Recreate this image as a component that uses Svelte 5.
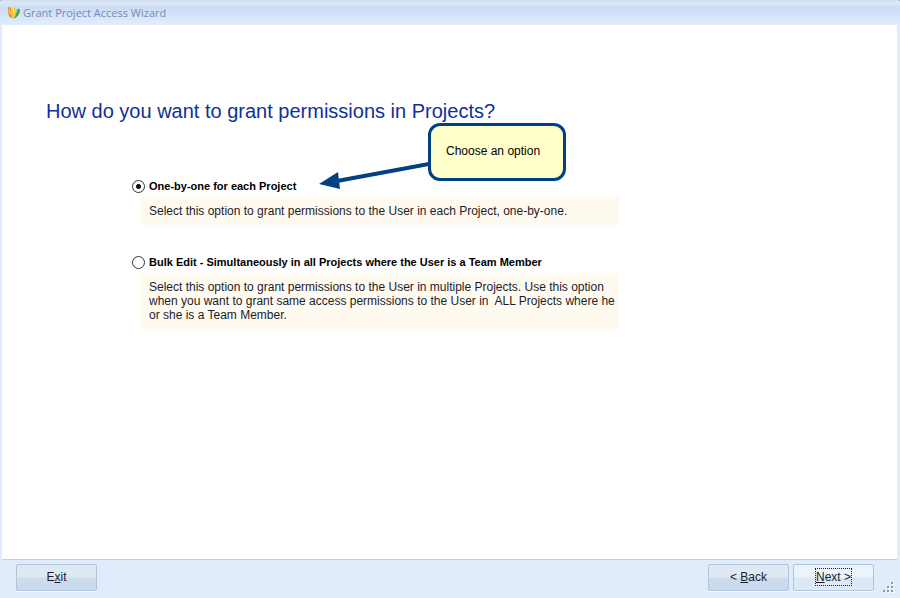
<script lang="ts">
  type Mode = 'single' | 'bulk';

  const options: { value: Mode; label: string; lines: string[] }[] = [
    {
      value: 'single',
      label: 'One-by-one for each Project',
      lines: ['Select this option to grant permissions to the User in each Project, one-by-one.']
    },
    {
      value: 'bulk',
      label: 'Bulk Edit - Simultaneously in all Projects where the User is a Team Member',
      lines: [
        'Select this option to grant permissions to the User in multiple Projects. Use this option',
        'when you want to grant same access permissions to the User in  ALL Projects where he',
        'or she is a Team Member.'
      ]
    }
  ];

  let mode = $state<Mode>('single');
</script>

<div class="window">
  <header class="title-bar">
    <svg class="logo" viewBox="0 0 14 14" aria-hidden="true">
      <path d="M1 2 Q2 0 4 2 L5 12 Q3 12 2 10 Q1 7 1 2 Z" fill="#ee8a2c" />
      <path d="M2 3 Q3 2 3 4 L4 9 Q2 8 2 3 Z" fill="#fbc98a" />
      <path d="M5 3 Q7 0 9 3 L7 12 L5 12 Z" fill="#f6c836" />
      <path d="M6 3 Q7 2 7 4 L6 9 Z" fill="#fdeaa0" />
      <path d="M10 3 Q12 2 13 4 Q13 9 7 13 Z" fill="#3f9c4b" />
      <path d="M10 3 L11 4 L8 11 L7 12 Z" fill="#a7d078" />
    </svg>
    <span>Grant Project Access Wizard</span>
  </header>

  <main class="page">
    <h1>How do you want to grant permissions in Projects?</h1>

    <div class="options" role="radiogroup" aria-label="Permission mode">
      {#each options as option}
        <div class="option">
          <label>
            <input type="radio" name="mode" value={option.value} bind:group={mode} />
            {option.label}
          </label>
          <p class="description">{option.lines.join('\n')}</p>
        </div>
      {/each}
    </div>

    <div class="callout">
      <svg class="arrow" viewBox="0 0 110 32" aria-hidden="true">
        <path d="M110 5 L18 22" stroke="#004182" stroke-width="4" />
        <path d="M0 25 L19 13 L21 30 Z" fill="#004182" />
      </svg>
      Choose an option
    </div>
  </main>

  <footer class="actions">
    <button type="button">E<u>x</u>it</button>
    <span class="spacer"></span>
    <button type="button">&lt; <u>B</u>ack</button>
    <button type="button" class="default"><span class="focus"><u>N</u>ext &gt;</span></button>
    <svg class="grip" viewBox="0 0 12 12" aria-hidden="true">
      <g fill="#fff">
        <path d="M9 1h2v2h-2z M5 5h2v2h-2z M9 5h2v2h-2z M1 9h2v2h-2z M5 9h2v2h-2z M9 9h2v2h-2z" />
      </g>
      <g fill="#8b95a3">
        <path d="M8 0h2v2h-2z M4 4h2v2h-2z M8 4h2v2h-2z M0 8h2v2h-2z M4 8h2v2h-2z M8 8h2v2h-2z" />
      </g>
    </svg>
  </footer>
</div>

<style>
  :global(body) {
    margin: 0;
    background: #9aa9ba;
  }

  .window {
    display: flex;
    flex-direction: column;
    box-sizing: border-box;
    min-height: 100vh;
    padding: 0 3px 0 2px;
    border-radius: 3px 3px 0 0;
    background: #e0ecfb;
    color: #1c1c2c;
    font-family: "Liberation Sans", Arial, sans-serif;
    font-size: 12px;
  }

  .title-bar {
    display: flex;
    align-items: center;
    gap: 2px;
    height: 25px;
    margin: 0 -3px 0 -2px;
    padding: 1px 7px 0;
    box-sizing: border-box;
    border-radius: 3px 3px 0 0;
    background: linear-gradient(#cfdcec 0, #dce8f7 2px, #d3e2f5 6px, #c9ddf5 7px, #e1edfc 100%);
    color: #7b89ae;
    font-family: "Open Sans", "Noto Sans", sans-serif;
    font-size: 11px;
    line-height: 14px;
  }

  .logo {
    width: 14px;
    height: 14px;
  }

  .page {
    position: relative;
    flex: 1;
    background: #fff;
  }

  h1 {
    margin: 0;
    padding: 74px 44px 0;
    color: #10309a;
    font-size: 20px;
    font-weight: 400;
    line-height: 24px;
  }

  .options {
    display: flex;
    flex-direction: column;
    gap: 28px;
    max-width: 487px;
    padding: 54px 0 24px 130px;
  }

  label {
    display: flex;
    align-items: center;
    gap: 4px;
    height: 18px;
    padding-bottom: 2px;
    color: #000;
    font-size: 11px;
    font-weight: 700;
  }

  input {
    appearance: none;
    flex: none;
    width: 13px;
    height: 13px;
    margin: 0;
    border: 1px solid #333;
    border-radius: 50%;
    background: #fff;
  }

  input:checked {
    background: radial-gradient(circle, #111 0 2px, #fff 3px);
  }

  .description {
    margin: 0 0 0 8px;
    padding: 7px 0 7px 9px;
    background: #fffaf0;
    line-height: 14px;
    white-space: pre-wrap;
  }

  .callout {
    position: absolute;
    top: 98px;
    left: 426px;
    box-sizing: border-box;
    width: 138px;
    padding: 16px 15px 18px;
    border: 3px solid #004182;
    border-radius: 12px;
    background: #ffffcc;
    color: #000;
    line-height: 18px;
    white-space: nowrap;
  }

  .arrow {
    position: absolute;
    top: 33px;
    right: 134px;
    width: 110px;
    height: 32px;
  }

  .actions {
    display: flex;
    align-items: center;
    gap: 4px;
    height: 39px;
    box-sizing: border-box;
    padding: 0 2px 4px 14px;
    border-top: 1px solid #c8ced8;
  }

  .spacer {
    flex: 1;
  }

  button {
    width: 81px;
    height: 27px;
    padding: 0;
    border: 1px solid #b0c4da;
    border-radius: 2px;
    background: linear-gradient(#dfe9f4 0 48%, #cddcee 52%, #c8d9ef 100%);
    box-shadow: 0 1px 0 #f7fbff;
    color: #1c1c2c;
    font: inherit;
  }

  .default {
    background: linear-gradient(#edf3fb 0 48%, #dbe7f5 52%, #dfeaf8 100%);
  }

  .focus {
    display: inline-block;
    padding: 1px 0;
    border: 1px dotted #222;
  }

  .grip {
    align-self: flex-end;
    width: 12px;
    height: 12px;
    margin-left: 5px;
  }
</style>
